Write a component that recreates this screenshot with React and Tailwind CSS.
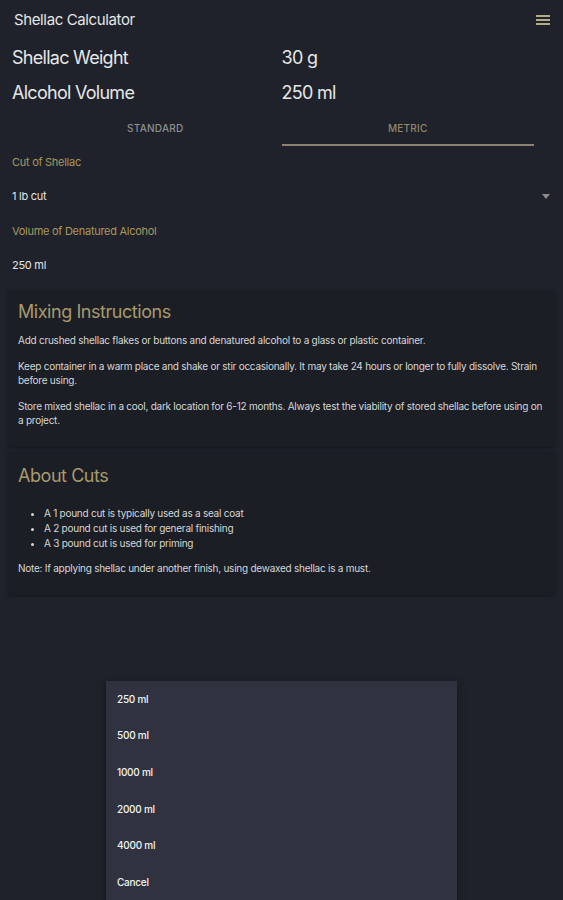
import React from 'react';

const fontStack = { fontFamily: 'Inter, "Noto Sans", sans-serif' };

function Field({ label, value, showArrow, labelH, valueH }) {
  return (
    <div>
      <div className={`flex items-center px-3 text-[11px] tracking-tight text-[#a7985e] ${labelH}`}>{label}</div>
      <div className={`flex items-center justify-between px-3 text-[11px] tracking-tight text-[#e4e4e4] ${valueH}`}>
        <span>{value}</span>
        {showArrow && (
          <svg width="8" height="5" viewBox="0 0 8 5" className="mr-[1px]">
            <path d="M0 0 L8 0 L4 5 Z" fill="#8b8b8b" />
          </svg>
        )}
      </div>
    </div>
  );
}

function Card({ title, children, className }) {
  return (
    <div className={`mx-2 rounded-sm bg-[#1b1e25] px-[10px] shadow-[0_1px_3px_rgba(0,0,0,0.35)] ${className}`}>
      <h2 className="h-6 text-[18px] leading-6 tracking-tight text-[#a89a6c]">{title}</h2>
      {children}
    </div>
  );
}

export default function App() {
  const volumes = ['250 ml', '500 ml', '1000 ml', '2000 ml', '4000 ml', 'Cancel'];

  return (
    <div className="relative h-[900px] w-full overflow-hidden bg-[#1f222a]" style={fontStack}>
      <header className="flex h-10 items-center justify-between pl-[14px] pr-[13px]">
        <h1 className="text-[15px] tracking-tight text-[#e6e6e6]">Shellac Calculator</h1>
        <svg width="14" height="10" viewBox="0 0 14 10">
          <rect x="0" y="0" width="14" height="2" fill="#b3ab84" />
          <rect x="0" y="4" width="14" height="2" fill="#b3ab84" />
          <rect x="0" y="8" width="14" height="2" fill="#b3ab84" />
        </svg>
      </header>

      <div className="grid grid-cols-2 px-3 text-[18px] tracking-[-0.04em] text-[#e6e6e6]">
        <div className="flex h-[35px] items-center">Shellac Weight</div>
        <div className="flex h-[35px] items-center">30 g</div>
        <div className="flex h-[35px] items-center">Alcohol Volume</div>
        <div className="flex h-[35px] items-center">250 ml</div>
      </div>

      <div className="grid h-9 grid-cols-2 px-[29px] text-[10px] font-medium tracking-wide">
        <div className="flex items-center justify-center text-[#8e8e8e]">STANDARD</div>
        <div className="flex items-center justify-center border-b-2 border-[#8a8371] pt-[2px] text-[#8f8868]">METRIC</div>
      </div>

      <Field label="Cut of Shellac" value="1 lb cut" showArrow labelH="h-8" valueH="h-9" />
      <Field label="Volume of Denatured Alcohol" value="250 ml" labelH="h-[34px]" valueH="h-[34px]" />

      <Card title="Mixing Instructions" className="mt-2 pt-[10px] pb-[20px]">
        <div className="mt-[9px] space-y-3 text-[10px] leading-[14px] tracking-tight text-[#d6d6d6]">
          <p>Add crushed shellac flakes or buttons and denatured alcohol to a glass or plastic container.</p>
          <p>Keep container in a warm place and shake or stir occasionally. It may take 24 hours or longer to fully dissolve. Strain before using.</p>
          <p>Store mixed shellac in a cool, dark location for 6-12 months. Always test the viability of stored shellac before using on a project.</p>
        </div>
      </Card>

      <Card title="About Cuts" className="mt-[5px] pt-3 pb-5">
        <ul className="mt-[18px] list-disc pl-[26px] text-[10px] leading-[15px] tracking-tight text-[#d6d6d6]">
          <li>A 1 pound cut is typically used as a seal coat</li>
          <li>A 2 pound cut is used for general finishing</li>
          <li>A 3 pound cut is used for priming</li>
        </ul>
        <p className="mt-[10px] text-[10px] leading-[14px] tracking-tight text-[#d6d6d6]">
          Note: If applying shellac under another finish, using dewaxed shellac is a must.
        </p>
      </Card>

      <div className="absolute left-[106px] top-[681px] h-[240px] w-[351px] bg-[#30333f] shadow-[0_2px_8px_rgba(0,0,0,0.4)]">
        {volumes.map((v) => (
          <div key={v} className="flex h-[36.6px] items-center px-[11px] text-[10px] font-medium tracking-tight text-[#f2f2f2]">
            {v}
          </div>
        ))}
      </div>
    </div>
  );
}
